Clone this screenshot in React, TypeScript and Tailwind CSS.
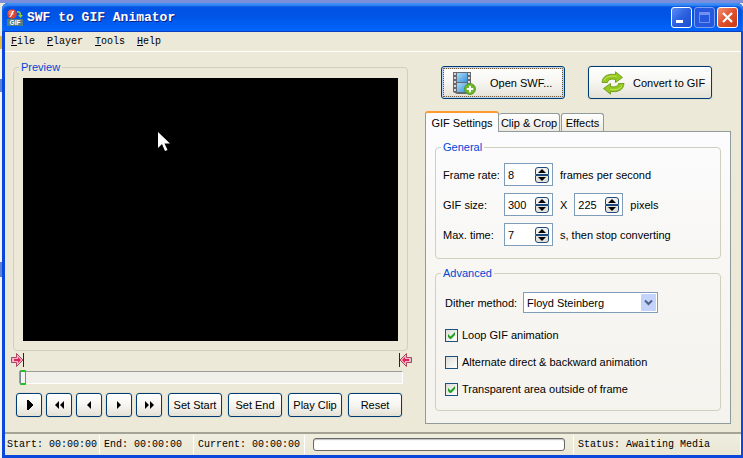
import React, { useId, useState } from "react";

const groupClass = "rounded border border-[#d0d0bf]";
const legendClass = "px-0.5 leading-4 text-[#0046d5]";
const buttonClass =
  "flex items-center rounded-[3px] border border-[#003c74] bg-linear-to-b from-white via-[#f6f5f1] to-[#e4e1d6] shadow-[0_0_0_1px_#e3e0d1]";

const menuItems = ["File", "Player", "Tools", "Help"];

const playerButtons = [
  { label: "Play", path: "M10 7h2v1h1v1h1v1h1v1h1v2h-1v1h-1v1h-1v1h-1v1h-2z" },
  { label: "Fast backward", path: "M12 8v8l-4-4zM17 8v8l-4-4z" },
  { label: "Step backward", path: "M14 8v8l-4-4z" },
  { label: "Step forward", path: "M10 8v8l4-4z" },
  { label: "Fast forward", path: "M8 8v8l4-4zM13 8v8l4-4z" },
];

const clipButtons = ["Set Start", "Set End", "Play Clip", "Reset"];

const options = [
  { label: "Loop GIF animation", checked: true },
  { label: "Alternate direct & backward animation", checked: false },
  { label: "Transparent area outside of frame", checked: true },
];

function AppIcon() {
  return (
    <svg width="16" height="17" viewBox="0 0 16 17" aria-hidden="true">
      <circle cx="5" cy="5" r="4.8" fill="#d9432f" />
      <circle cx="4" cy="3.6" r="2.6" fill="#f08a70" opacity=".7" />
      <path d="M7 2.2C4.800 2.300 5 5 4.200 6.500 3.900 7.300 3.300 7.600 2.700 7.600M4.500 5h2" fill="none" stroke="#fff" strokeWidth="1.2" />
      <path d="M10 3c2-.5 3.500.5 3.500 3" fill="none" stroke="#8fd13a" strokeWidth="1.5" />
      <path d="M11 6h5l-2.500 3z" fill="#8fd13a" />
      <rect y="10" width="16" height="7" fill="#4f7f84" />
      <text x="8" y="16" textAnchor="middle" fontSize="6.500" fontWeight="bold" fill="#fff" fontFamily="Liberation Sans, sans-serif">
        GIF
      </text>
    </svg>
  );
}

function FilmIcon() {
  return (
    <svg width="24" height="24" viewBox="0 0 24 24" aria-hidden="true">
      <defs>
        <linearGradient id="film" x1="0" y1="0" x2="1" y2="1">
          <stop offset="0" stopColor="#a9dcfa" />
          <stop offset="1" stopColor="#3c93dc" />
        </linearGradient>
      </defs>
      <path d="M1 1h18v22H5l-4-2z" fill="#66696d" />
      <rect x="5" y="2" width="10" height="9" fill="url(#film)" />
      <rect x="5" y="12" width="10" height="9" fill="url(#film)" />
      <path d="M3 2v20M17 2v20" stroke="#d5d8dc" strokeWidth="2" strokeDasharray="2 2" />
      <circle cx="18" cy="18" r="5.500" fill="#6db82a" stroke="#4d9415" strokeWidth=".8" />
      <path d="M18 14.800v6.400M14.800 18h6.400" stroke="#fff" strokeWidth="2" />
    </svg>
  );
}

function ConvertIcon() {
  return (
    <svg width="24" height="24" viewBox="0 0 24 24" fill="#96c81e" stroke="#5e9412" strokeWidth=".8" strokeLinejoin="round" aria-hidden="true">
      <path d="M1 11.500C1.500 5 7 2.500 14.500 3.500V.8L21.500 6.500l-7 5V8.500C10 7.500 7 8.500 6.500 11.500z" />
      <path d="M23 12.500C22.500 19 17 21.500 9.500 20.500v2.700L2.500 17.500l7-5v3c4.500 1 7.500 0 8-3z" />
      <path d="M2.800 9.500C5 5.500 9 4.500 15.500 5.200" fill="none" stroke="#cdec70" />
      <path d="M21 14.500C19 18.500 15 19 9.500 18.500" fill="none" stroke="#cdec70" />
    </svg>
  );
}

function MarkerIcon({ flip = false }: { flip?: boolean }) {
  return (
    <svg width="13" height="14" viewBox="0 0 13 14" className={flip ? "-scale-x-100" : ""} aria-hidden="true">
      <path d="M.5 4.500h5v-4L12 7l-6.500 6.500v-4h-5z" fill="#f0b8c8" stroke="#a8485c" />
      <path d="M3 6h4V4l3 3-3 3V8H3z" fill="#e0245c" />
      <path d="M12 0h1v14h-1z" fill="#1010c8" />
    </svg>
  );
}

function Spinner({ label, initial }: { label: string; initial: number }) {
  const [value, setValue] = useState(initial);
  return (
    <div className="flex h-[23px] w-[49px] shrink-0 border border-[#7f9db9] bg-white">
      <input
        aria-label={label}
        value={value}
        onChange={(e) => setValue(Number(e.target.value) || 0)}
        className="w-0 min-w-0 flex-1 pl-[3px] outline-none"
      />
      <div className="mr-[3px] flex flex-col justify-center">
        <button
          aria-label={`Increase ${label}`}
          onClick={() => setValue(value + 1)}
          className="flex h-2 w-3.5 items-center justify-center rounded-t-[3px] border border-[#1c4a80] bg-[#f1f0ea]"
        >
          <svg width="8" height="4" viewBox="0 0 8 4">
            <path d="M4 0l4 4H0z" />
          </svg>
        </button>
        <button
          aria-label={`Decrease ${label}`}
          onClick={() => setValue(Math.max(0, value - 1))}
          className="flex h-2 w-3.5 items-center justify-center rounded-b-[3px] border border-[#1c4a80] bg-[#e6e3d9]"
        >
          <svg width="8" height="4" viewBox="0 0 8 4">
            <path d="M0 0h8L4 4z" />
          </svg>
        </button>
      </div>
    </div>
  );
}

function CheckOption({ label, checked }: { label: string; checked: boolean }) {
  const id = useId();
  return (
    <div className="flex h-5 items-center gap-1">
      <span className="relative flex">
        <input
          id={id}
          type="checkbox"
          defaultChecked={checked}
          className="peer h-[13px] w-[13px] appearance-none border border-[#1c5180] bg-linear-to-br from-[#dcdcd7] to-white"
        />
        <svg
          viewBox="0 0 13 13"
          className="pointer-events-none absolute inset-0 hidden h-[13px] w-[13px] peer-checked:block"
        >
          <path d="M3 5v3l2 2h1l4-4V3L5.500 7.500z" fill="#21a121" />
        </svg>
      </span>
      <label htmlFor={id}>{label}</label>
    </div>
  );
}

function TitleBar() {
  return (
    <header className="flex h-[29px] items-center rounded-t-md bg-linear-to-b from-[#0050e0] via-[#0056e8] to-[#0066ff] pr-[5px] pl-[5px] shadow-[inset_0_3px_2px_#3d8ff5,inset_0_-1px_0_#0840c0]">
      <AppIcon />
      <h1 className="ml-1 flex-1 font-['Liberation_Mono',monospace] text-[13px] font-bold text-white [text-shadow:1px_1px_#0a1f80]">
        SWF to GIF Animator
      </h1>
      <div className="flex gap-0.5">
        <button aria-label="Minimize" className="h-[21px] w-[21px] rounded-[3px] border border-white bg-linear-to-br from-[#5a8cf5] via-[#2a5fe0] to-[#1c4fd0]">
          <svg width="19" height="19" viewBox="0 0 19 19">
            <path d="M4 12h7v3H4z" fill="#fff" />
          </svg>
        </button>
        <button aria-label="Maximize" disabled className="h-[21px] w-[21px] rounded-[3px] border border-[#7d9ff0] bg-[#2558de]">
          <svg width="19" height="19" viewBox="0 0 19 19">
            <path d="M4.500 4.500h10v10h-10z" fill="none" stroke="#7191ec" />
            <path d="M4 4h11v3H4z" fill="#7191ec" />
          </svg>
        </button>
        <button aria-label="Close" className="h-[21px] w-[21px] rounded-[3px] border border-white bg-linear-to-br from-[#f09070] via-[#e0502c] to-[#c83c14]">
          <svg width="19" height="19" viewBox="0 0 19 19">
            <path d="M5 5l9 9M14 5l-9 9" stroke="#fff" strokeWidth="2.200" />
          </svg>
        </button>
      </div>
    </header>
  );
}

function PreviewPane() {
  return (
    <section className="min-w-0 flex-1 pt-[7px] pr-[13px] pl-1.5">
      <fieldset className={`${groupClass} mr-1 ml-0.5 px-[9px] pt-[3px] pb-[9px]`}>
        <legend className={`${legendClass} -ml-1`}>Preview</legend>
        <div className="relative aspect-[375/263] w-full bg-black">
          <svg width="12" height="21" viewBox="0 0 12 21" className="absolute top-[20%] left-[36%]" aria-hidden="true">
            <path d="M0 1v16l4-4 3 7 2.500-1-3-6.500H12z" fill="#fff" />
          </svg>
        </div>
      </fieldset>

      <div className="mt-0.5 flex justify-between">
        <MarkerIcon />
        <MarkerIcon flip />
      </div>
      <input
        type="range"
        aria-label="Position"
        defaultValue={0}
        className="mt-[3px] mr-2.5 ml-2 block h-[15px] w-[calc(100%-17px)] appearance-none bg-transparent [&::-webkit-slider-runnable-track]:h-[13px] [&::-webkit-slider-runnable-track]:border [&::-webkit-slider-runnable-track]:border-t-[#9d9c99] [&::-webkit-slider-runnable-track]:border-r-white [&::-webkit-slider-runnable-track]:border-b-white [&::-webkit-slider-runnable-track]:border-l-[#9d9c99] [&::-webkit-slider-runnable-track]:bg-[#f0efe9] [&::-webkit-slider-thumb]:-mt-0.5 [&::-webkit-slider-thumb]:h-[15px] [&::-webkit-slider-thumb]:w-1.5 [&::-webkit-slider-thumb]:appearance-none [&::-webkit-slider-thumb]:rounded-[1px] [&::-webkit-slider-thumb]:border [&::-webkit-slider-thumb]:border-x-[#778892] [&::-webkit-slider-thumb]:border-y-2 [&::-webkit-slider-thumb]:border-y-[#21c121] [&::-webkit-slider-thumb]:bg-[#f3f3ef]"
      />

      <div className="mt-2 ml-[5px] flex gap-1.5">
        <div className="flex gap-1">
          {playerButtons.map((button) => (
            <button key={button.label} aria-label={button.label} className={`${buttonClass} h-6 w-[26px] justify-center`}>
              <svg width="24" height="24" viewBox="0 0 24 24" className="shrink-0">
                <path d={button.path} />
              </svg>
            </button>
          ))}
        </div>
        {clipButtons.map((label) => (
          <button key={label} className={`${buttonClass} h-6 w-[54px] justify-center whitespace-nowrap`}>
            {label}
          </button>
        ))}
      </div>
    </section>
  );
}

function SettingsPane() {
  return (
    <section className="w-[306px] shrink-0 pt-3.5 pb-2">
      <div className="ml-4 flex gap-[23px]">
        <button className={`${buttonClass} h-[33px] w-[124px] p-px shadow-[inset_0_0_0_2px_#bcd4f6]`}>
          <span className="flex h-full w-full items-center gap-3.5 border border-dotted border-[#7a5a30] pl-2">
            <FilmIcon />
            Open SWF...
          </span>
        </button>
        <button className={`${buttonClass} h-[33px] w-[124px] gap-2 pl-3 whitespace-nowrap`}>
          <ConvertIcon />
          Convert to GIF
        </button>
      </div>

      <div role="tablist" className="mt-3 flex items-end">
        <button role="tab" aria-selected="true" className="relative -mb-px h-[21px] w-[74px] rounded-t-[3px] border border-t-2 border-b-0 border-[#919b9c] border-t-[#ff9a2e] bg-[#fcfcfe]">
          GIF Settings
        </button>
        <button role="tab" aria-selected="false" className="h-[18px] w-[61px] rounded-t-[3px] border border-b-0 border-l-0 border-[#919b9c] bg-linear-to-b from-white to-[#eceadf]">
          Clip &amp; Crop
        </button>
        <button role="tab" aria-selected="false" className="ml-px h-[18px] w-[43px] rounded-t-[3px] border border-b-0 border-[#919b9c] bg-linear-to-b from-white to-[#eceadf]">
          Effects
        </button>
      </div>

      <div className="flex flex-col gap-1.5 border border-[#919b9c] bg-linear-to-b from-[#fcfcfe] via-[#f7f6f2] to-[#f4f3ee] px-[9px] pt-[7px] pb-3">
        <fieldset className={`${groupClass} flex flex-col gap-[7px] px-[7px] pt-2 pb-3`}>
          <legend className={`${legendClass} -ml-0.5`}>General</legend>
          <div className="flex items-center gap-[7px]">
            <div className="flex items-center">
              <span className="w-[61px]">Frame rate:</span>
              <Spinner label="Frame rate" initial={8} />
            </div>
            frames per second
          </div>
          <div className="flex items-center gap-[7px]">
            <div className="flex items-center">
              <span className="w-[61px]">GIF size:</span>
              <Spinner label="GIF width" initial={300} />
            </div>
            <span>X</span>
            <Spinner label="GIF height" initial={225} />
            pixels
          </div>
          <div className="flex items-center gap-[7px]">
            <div className="flex items-center">
              <span className="w-[61px]">Max. time:</span>
              <Spinner label="Max. time" initial={7} />
            </div>
            s, then stop converting
          </div>
        </fieldset>

        <fieldset className={`${groupClass} px-[9px] pt-[11px] pb-[11px]`}>
          <legend className={`${legendClass} -ml-1`}>Advanced</legend>
          <div className="flex items-center">
            <label htmlFor="dither" className="w-[78px]">
              Dither method:
            </label>
            <div className="relative w-[135px]">
              <select id="dither" className="block h-[21px] w-full appearance-none border border-[#7f9db9] bg-white pl-[3px] outline-none">
                <option>Floyd Steinberg</option>
                <option>None</option>
              </select>
              <svg width="15" height="17" viewBox="0 0 15 17" className="pointer-events-none absolute top-0.5 right-0.5" aria-hidden="true">
                <rect width="15" height="17" rx="1" fill="#c3d3fc" />
                <path d="M4 6.500l3.500 3.500L11 6.500" fill="none" stroke="#4d6185" strokeWidth="2" />
              </svg>
            </div>
          </div>
          <div className="mt-3 flex flex-col gap-[7px]">
            {options.map((option) => (
              <CheckOption key={option.label} {...option} />
            ))}
          </div>
        </fieldset>
      </div>
    </section>
  );
}

function StatusBar() {
  const cell = "flex items-center border-r border-r-white whitespace-pre";
  return (
    <footer className="flex h-[23px] items-stretch border-t-2 border-[#a5a396] bg-linear-to-b from-[#f0eee0] to-[#e9e6d4] py-px font-['Liberation_Mono',monospace] text-[10px]">
      <div className={`${cell} w-[95px] pl-0.5`}>Start: 00:00:00</div>
      <div className={`${cell} w-[94px] pl-1`}>End: 00:00:00</div>
      <div className={`${cell} w-[111px] pl-1`}>Current: 00:00:00</div>
      <div className={`${cell} min-w-0 flex-1 px-2`}>
        <div role="progressbar" aria-label="Conversion" className="h-[13px] w-full rounded-[3px] border border-[#686868] bg-white shadow-[inset_0_1px_1px_#bebebe]" />
      </div>
      <div className={`${cell} w-[167px] pl-1`}>Status: Awaiting Media</div>
    </footer>
  );
}

export default function App() {
  return (
    <div className="flex min-h-screen bg-[linear-gradient(#7b8fdc_0_3px,#eceadd_3px_36px,#e8b93c_36px_49px,#f4f4f0_49px_79px,#5c83d8_79px_92px,#f4f4f8_92px_262px,#5c83d8_262px_277px,#f4f4f8_277px)] pt-[3px] pl-0.5 font-['Liberation_Sans',Arial,sans-serif] text-[11px] leading-4 text-black">
      <div className="flex flex-1 flex-col rounded-t-md bg-[#0a48dc]">
        <TitleBar />
        <div className="mr-0.5 mb-[3px] ml-[3px] flex flex-1 flex-col bg-[#ece9d8]">
          <nav className="flex h-5 items-center gap-3 border-b border-white pt-px pl-1.5 font-['Liberation_Mono',monospace] text-[10px]">
            {menuItems.map((item) => (
              <button key={item}>
                <span className="underline">{item[0]}</span>
                {item.slice(1)}
              </button>
            ))}
          </nav>
          <main className="flex flex-1 pr-2.5">
            <PreviewPane />
            <SettingsPane />
          </main>
          <StatusBar />
        </div>
      </div>
    </div>
  );
}
